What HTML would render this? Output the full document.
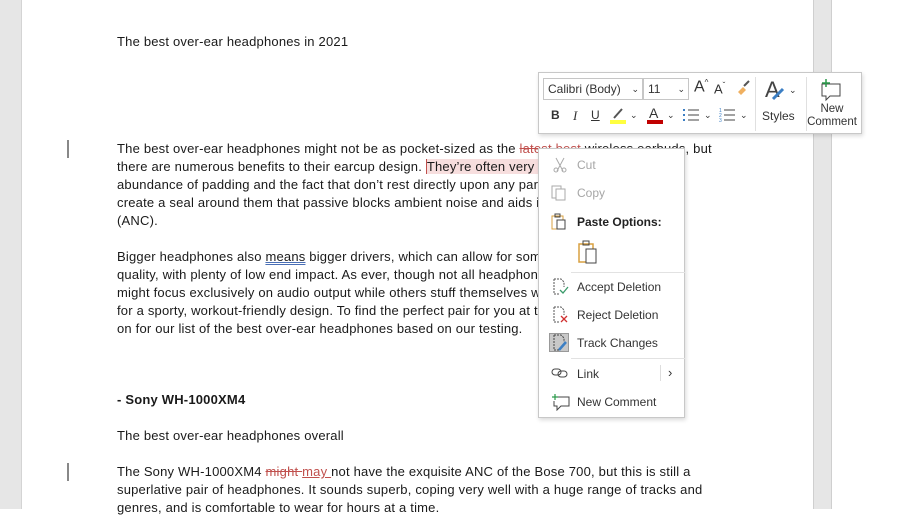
<!DOCTYPE html>
<html><head><meta charset="utf-8"><style>
*{margin:0;padding:0;box-sizing:border-box}
body{width:904px;height:509px;overflow:hidden;background:#fff;position:relative;font-family:"Liberation Sans",sans-serif}
.gl{position:absolute;left:0;top:0;width:22px;height:509px;background:#e6e6e6;border-right:1px solid #d4d4d4}
.gr{position:absolute;left:813px;top:0;width:19px;height:509px;background:#e6e6e6;border-left:1px solid #cfcfcf;border-right:1px solid #cfcfcf}
.l{position:absolute;left:117px;font-size:13px;letter-spacing:0.2px;color:#1a1a1a;white-space:nowrap;line-height:18px}
.del{color:#c0504d;text-decoration:line-through}
.ins{color:#c0504d;text-decoration:underline}
.bar{position:absolute;left:67px;width:2px;height:18px;background:#888}
.tb{position:absolute;left:538px;top:72px;width:324px;height:62px;background:#fff;border:1px solid #c8c8c8;box-shadow:1px 2px 4px rgba(0,0,0,.15);font-size:12px;color:#333}
.cm{position:absolute;left:538px;top:148px;width:147px;height:270px;background:#fff;border:1px solid #c8c8c8;box-shadow:1px 2px 4px rgba(0,0,0,.15);font-size:12px;color:#333}
.it{position:absolute;left:38px;white-space:nowrap}
.ab{position:absolute}
</style></head><body>
<div class="gl"></div><div class="gr"></div>

<div class="l" style="top:33px">The best over-ear headphones in 2021</div>
<div class="bar" style="top:140px"></div>
<div class="l" style="top:140px">The best over-ear headphones might not be as pocket-sized as the <span class="del">latest best</span> wireless earbuds, but</div>
<div class="l" style="top:158px">there are numerous benefits to their earcup design. <span style="background:#f7dede;border-left:1px solid #c0504d">They’re often very comfortable thanks</span> to an</div>
<div class="l" style="top:176px">abundance of padding and the fact that don’t rest directly upon any part of your ear, and they</div>
<div class="l" style="top:194px">create a seal around them that passive blocks ambient noise and aids in noise cancellation</div>
<div class="l" style="top:212px">(ANC).</div>
<div class="l" style="top:248px">Bigger headphones also <span style="text-decoration:underline double #4a6fb5">means</span> bigger drivers, which can allow for some truly excellent sound</div>
<div class="l" style="top:266px">quality, with plenty of low end impact. As ever, though not all headphones are equal – some</div>
<div class="l" style="top:284px">might focus exclusively on audio output while others stuff themselves with features or try</div>
<div class="l" style="top:302px">for a sporty, workout-friendly design. To find the perfect pair for you at the right price, read</div>
<div class="l" style="top:320px">on for our list of the best over-ear headphones based on our testing.</div>
<div class="l" style="top:391px;font-weight:bold">- Sony WH-1000XM4</div>
<div class="l" style="top:427px">The best over-ear headphones overall</div>
<div class="bar" style="top:463px"></div>
<div class="l" style="top:463px">The Sony WH-1000XM4 <span class="del">might </span><span class="ins">may </span>not have the exquisite ANC of the Bose 700, but this is still a</div>
<div class="l" style="top:481px">superlative pair of headphones. It sounds superb, coping very well with a huge range of tracks and</div>
<div class="l" style="top:499px">genres, and is comfortable to wear for hours at a time.</div>

<div class="tb">
 <div class="ab" style="left:4px;top:5px;width:100px;height:22px;border:1px solid #c6c6c6;padding:3px 4px">Calibri (Body)<span style="position:absolute;right:3px;font-size:9px;top:5px">⌄</span></div>
 <div class="ab" style="left:104px;top:5px;width:46px;height:22px;border:1px solid #c6c6c6;padding:3px 4px">11<span style="position:absolute;right:3px;font-size:9px;top:5px">⌄</span></div>
 <div class="ab" style="left:155px;top:5px;font-size:16px">A<sup style="font-size:8px">^</sup></div>
 <div class="ab" style="left:175px;top:8px;font-size:13px">A<sup style="font-size:8px">ˇ</sup></div>
 <svg class="ab" style="left:196px;top:6px" width="16" height="16"><path d="M3 13 L8 8 L11 11 L6 16Z" fill="#f0b060"/><path d="M9 7 L14 2" stroke="#555" stroke-width="2"/></svg>
 <div class="ab" style="left:12px;top:35px;font-weight:bold">B</div>
 <div class="ab" style="left:34px;top:35px;font-style:italic;font-family:'Liberation Serif',serif;font-size:13px">I</div>
 <div class="ab" style="left:52px;top:35px;text-decoration:underline">U</div>
 <div class="ab" style="left:71px;top:47px;width:16px;height:4px;background:#ffff40"></div>
 <svg class="ab" style="left:73px;top:34px" width="12" height="12"><path d="M2 11 L10 2" stroke="#555" stroke-width="2"/></svg>
 <div class="ab" style="left:91px;top:37px;font-size:9px">⌄</div>
 <div class="ab" style="left:110px;top:32px;font-size:14px">A</div>
 <div class="ab" style="left:108px;top:47px;width:16px;height:4px;background:#c00000"></div>
 <div class="ab" style="left:128px;top:37px;font-size:9px">⌄</div>
 <svg class="ab" style="left:144px;top:34px" width="18" height="16"><g fill="#3c7fc4"><rect x="0" y="2" width="2" height="2"/><rect x="0" y="7" width="2" height="2"/><rect x="0" y="12" width="2" height="2"/></g><g stroke="#444"><line x1="5" y1="3" x2="16" y2="3"/><line x1="5" y1="8" x2="16" y2="8"/><line x1="5" y1="13" x2="16" y2="13"/></g></svg>
 <div class="ab" style="left:165px;top:37px;font-size:9px">⌄</div>
 <svg class="ab" style="left:180px;top:34px" width="18" height="16"><g fill="#3c7fc4" font-size="5" font-family="Liberation Sans"><text x="0" y="5">1</text><text x="0" y="10">2</text><text x="0" y="15">3</text></g><g stroke="#444"><line x1="5" y1="3" x2="16" y2="3"/><line x1="5" y1="8" x2="16" y2="8"/><line x1="5" y1="13" x2="16" y2="13"/></g></svg>
 <div class="ab" style="left:201px;top:37px;font-size:9px">⌄</div>
 <div class="ab" style="left:216px;top:4px;width:1px;height:54px;background:#e0e0e0"></div>
 <div class="ab" style="left:226px;top:4px;font-size:22px;color:#444">A</div>
 <svg class="ab" style="left:232px;top:14px" width="16" height="14"><path d="M2 12 L12 2" stroke="#3c7fc4" stroke-width="3"/></svg>
 <div class="ab" style="left:250px;top:12px;font-size:9px">⌄</div>
 <div class="ab" style="left:223px;top:36px">Styles</div>
 <div class="ab" style="left:267px;top:4px;width:1px;height:54px;background:#e0e0e0"></div>
 <svg class="ab" style="left:279px;top:5px" width="26" height="24"><path d="M4 6 H22 V18 H12 L8 22 V18 H4Z" fill="none" stroke="#444"/><path d="M8 1 V9 M4 5 H12" stroke="#2a9a4a" stroke-width="1.5"/></svg>
 <div class="ab" style="left:263px;top:30px;width:60px;text-align:center;line-height:13px;font-size:11.5px">New<br>Comment</div>
</div>

<div class="cm">
 <svg class="ab" style="left:14px;top:8px" width="14" height="16"><path d="M3 1 L10 14 M11 1 L4 14" stroke="#aaa"/><circle cx="3" cy="13" r="2" fill="none" stroke="#aaa"/><circle cx="11" cy="13" r="2" fill="none" stroke="#aaa"/></svg>
 <div class="it" style="top:9px;color:#a6a6a6">Cut</div>
 <svg class="ab" style="left:12px;top:36px" width="16" height="16"><rect x="1" y="1" width="9" height="12" fill="none" stroke="#aaa"/><rect x="5" y="4" width="9" height="11" fill="#fff" stroke="#aaa"/></svg>
 <div class="it" style="top:37px;color:#a6a6a6">Copy</div>
 <svg class="ab" style="left:12px;top:64px" width="16" height="17"><rect x="1" y="3" width="11" height="13" fill="none" stroke="#d9a040"/><rect x="6" y="7" width="8" height="9" fill="#fff" stroke="#444"/><rect x="4" y="1" width="5" height="3" fill="none" stroke="#444"/></svg>
 <div class="it" style="top:66px;font-weight:bold;color:#222">Paste Options:</div>
 <svg class="ab" style="left:38px;top:90px" width="22" height="26"><rect x="2" y="5" width="14" height="18" fill="none" stroke="#d9a040" stroke-width="1.5"/><rect x="9" y="10" width="10" height="14" fill="#fff" stroke="#444"/><rect x="6" y="2" width="6" height="4" fill="none" stroke="#444"/></svg>
 <div class="ab" style="left:32px;top:123px;width:114px;height:1px;background:#e2e2e2"></div>
 <svg class="ab" style="left:13px;top:129px" width="18" height="18"><path d="M2 1 H9 L12 4 V9 M2 1 V16 H7" fill="none" stroke="#555" stroke-dasharray="2 1"/><path d="M8 12 L11 15 L16 9" fill="none" stroke="#3a9a6a" stroke-width="1.3"/></svg>
 <div class="it" style="top:131px">Accept Deletion</div>
 <svg class="ab" style="left:13px;top:157px" width="18" height="18"><path d="M2 1 H9 L12 4 V9 M2 1 V16 H7" fill="none" stroke="#555" stroke-dasharray="2 1"/><path d="M9 10 L15 16 M15 10 L9 16" stroke="#d03030" stroke-width="1.3"/></svg>
 <div class="it" style="top:159px">Reject Deletion</div>
 <div class="ab" style="left:10px;top:184px;width:20px;height:19px;background:#c8c8c8;border:1px solid #999"></div>
 <svg class="ab" style="left:12px;top:185px" width="18" height="18"><path d="M3 1 H10 L13 4 V8 M3 1 V16 H8" fill="none" stroke="#444" stroke-dasharray="2 1"/><path d="M8 16 L15 8" stroke="#3c7fc4" stroke-width="2.5"/></svg>
 <div class="it" style="top:187px">Track Changes</div>
 <div class="ab" style="left:32px;top:209px;width:114px;height:1px;background:#e2e2e2"></div>
 <svg class="ab" style="left:12px;top:218px" width="18" height="12"><rect x="1" y="2" width="9" height="6" rx="3" fill="none" stroke="#444"/><rect x="7" y="4" width="9" height="6" rx="3" fill="none" stroke="#444"/></svg>
 <div class="it" style="top:218px">Link</div>
 <div class="ab" style="left:121px;top:216px;width:1px;height:16px;background:#ddd"></div>
 <div class="ab" style="left:129px;top:216px;font-size:13px">›</div>
 <svg class="ab" style="left:12px;top:244px" width="20" height="18"><path d="M5 4 H18 V13 H10 L6 17 V13 H3 V8" fill="none" stroke="#444"/><path d="M4 1 V7 M1 4 H7" stroke="#2a9a4a" stroke-width="1.2"/></svg>
 <div class="it" style="top:246px">New Comment</div>
</div>
</body></html>
